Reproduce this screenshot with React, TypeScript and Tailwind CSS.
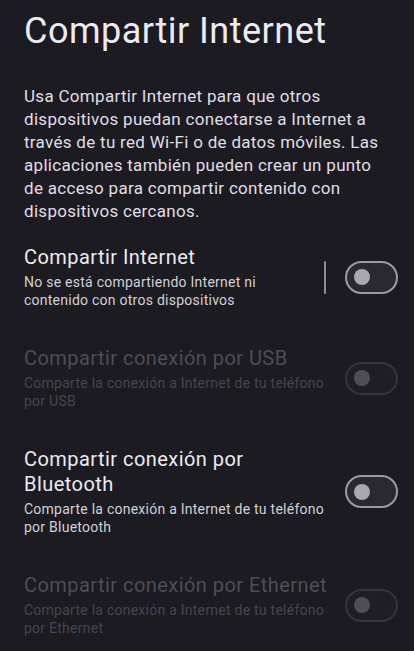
import React from "react";

type Item = {
  title: string;
  subtitle: string;
  enabled: boolean;
  divider?: boolean;
};

const items: Item[] = [
  {
    title: "Compartir Internet",
    subtitle: "No se está compartiendo Internet ni contenido con otros dispositivos",
    enabled: true,
    divider: true,
  },
  {
    title: "Compartir conexión por USB",
    subtitle: "Comparte la conexión a Internet de tu teléfono por USB",
    enabled: false,
  },
  {
    title: "Compartir conexión por Bluetooth",
    subtitle: "Comparte la conexión a Internet de tu teléfono por Bluetooth",
    enabled: true,
  },
  {
    title: "Compartir conexión por Ethernet",
    subtitle: "Comparte la conexión a Internet de tu teléfono por Ethernet",
    enabled: false,
  },
];

function Toggle({ enabled }: { enabled: boolean }) {
  return (
    <div
      className={
        enabled
          ? "flex h-[33px] w-[53px] shrink-0 items-center rounded-full border-2 border-[#9c9aa4] bg-[#2a2931] pl-[7px]"
          : "flex h-[33px] w-[53px] shrink-0 items-center rounded-full border-2 border-[#35343c] bg-[#1f1e26] pl-[7px]"
      }
    >
      <div
        className={
          enabled
            ? "h-[16px] w-[16px] rounded-full bg-[#a9a7b1]"
            : "h-[16px] w-[16px] rounded-full bg-[#4f4e56]"
        }
      />
    </div>
  );
}

export default function App() {
  return (
    <div
      className="min-h-[651px] w-full overflow-hidden bg-[#1c1b22] pl-6 pr-4"
      style={{ fontFamily: "Roboto, 'Noto Sans', sans-serif" }}
    >
      <h1 className="pt-[9px] text-[36px] leading-[44px] font-normal tracking-[0.5px] text-[#ecebf1]">
        Compartir Internet
      </h1>
      <p className="mt-[32px] pr-2 text-[17px] leading-[23px] tracking-[0.3px] text-[#e0dee6]">
        Usa Compartir Internet para que otros dispositivos puedan conectarse a Internet a
        través de tu red Wi-Fi o de datos móviles. Las aplicaciones también pueden crear un
        punto de acceso para compartir contenido con dispositivos cercanos.
      </p>
      <div className="mt-[22px] flex flex-col gap-[37px]">
        {items.map((item) => (
          <div key={item.title} className="flex items-center">
            <div className="min-w-0 flex-1 pr-4">
              <div
                className={
                  item.enabled
                    ? "text-[20px] leading-[25px] tracking-[0.45px] text-[#ecebf1]"
                    : "text-[20px] leading-[25px] tracking-[0.45px] text-[#4e4d56]"
                }
              >
                {item.title}
              </div>
              <div
                className={
                  item.enabled
                    ? "mt-[3px] text-[14px] leading-[18px] tracking-[0.25px] text-[#d2d0d8]"
                    : "mt-[3px] text-[14px] leading-[18px] tracking-[0.25px] text-[#46454e]"
                }
              >
                {item.subtitle}
              </div>
            </div>
            {item.divider && (
              <div className="mr-[19px] h-[33px] w-[2px] shrink-0 rounded bg-[#8d8b95]" />
            )}
            <Toggle enabled={item.enabled} />
          </div>
        ))}
      </div>
    </div>
  );
}
